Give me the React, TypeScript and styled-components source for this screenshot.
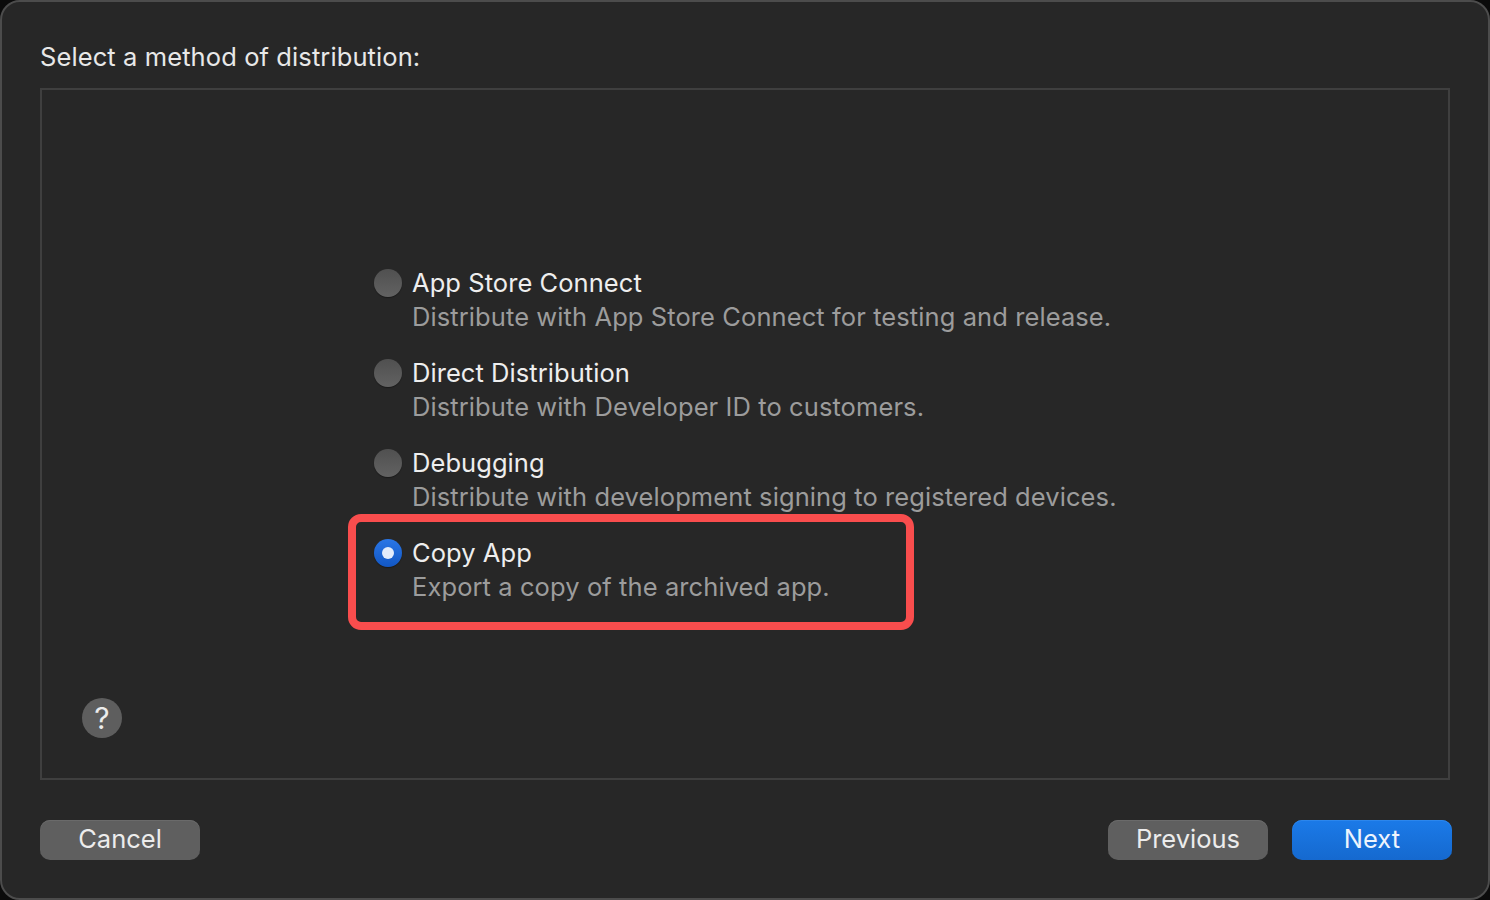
import React from "react";
import styled, { createGlobalStyle } from "styled-components";

const Global = createGlobalStyle`
  html, body { margin: 0; padding: 0; background: #0b0b0b; }
  body { width: 1490px; height: 900px; overflow: hidden; font-family: Inter, "Liberation Sans", sans-serif; }
`;

const Window = styled.div`
  box-sizing: border-box;
  width: 1490px;
  height: 900px;
  border: 2px solid #4c4c4c;
  border-radius: 20px;
  background: #272727;
  padding: 38px 36px 38px 38px;
  display: flex;
  flex-direction: column;
`;

const Heading = styled.div`
  font-size: 25.5px;
  line-height: 34px;
  letter-spacing: 0.1px;
  color: #e8e8e8;
  height: 48px;
`;

const Panel = styled.div`
  box-sizing: border-box;
  width: 1410px;
  height: 692px;
  border: 2px solid #3f3f3f;
  padding: 176px 0 0 332px;
  position: relative;
`;

const Options = styled.div`
  display: flex;
  flex-direction: column;
  position: relative;
`;

const Option = styled.div`
  display: flex;
  gap: 10px;
  height: 90px;
`;

const Radio = styled.span<{ $on?: boolean }>`
  box-sizing: border-box;
  flex: none;
  width: 28px;
  height: 28px;
  border-radius: 50%;
  margin-top: 3px;
  display: flex;
  align-items: center;
  justify-content: center;
  background: ${(p) =>
    p.$on ? "linear-gradient(#2a76e6, #1257c4)" : "linear-gradient(#505050, #626262)"};
  box-shadow: 0 1px 1px rgba(0, 0, 0, 0.35);
`;

const Dot = styled.span`
  width: 12px;
  height: 12px;
  border-radius: 50%;
  background: #e3ecfb;
`;

const Texts = styled.div`
  display: flex;
  flex-direction: column;
`;

const Title = styled.div`
  font-size: 25.5px;
  line-height: 34px;
  letter-spacing: 0.06px;
  color: #eeeeee;
  white-space: nowrap;
`;

const Description = styled.div`
  font-size: 25.5px;
  line-height: 34px;
  letter-spacing: 0.09px;
  color: #9c9c9c;
  white-space: nowrap;
`;

const Highlight = styled.div`
  box-sizing: border-box;
  position: absolute;
  left: -26px;
  top: 248px;
  width: 566px;
  height: 116px;
  border: 8px solid #f94d4d;
  border-radius: 13px;
`;

const Help = styled.div`
  position: absolute;
  left: 40px;
  top: 608px;
  width: 40px;
  height: 40px;
  border-radius: 50%;
  background: #5e5e5e;
  color: #ececec;
  font-size: 30px;
  line-height: 40px;
  text-align: center;
`;

const Footer = styled.div`
  margin-top: 40px;
  display: flex;
  align-items: center;
`;

const Button = styled.button<{ $primary?: boolean }>`
  box-sizing: border-box;
  width: 160px;
  height: 40px;
  padding: 0 0 2px;
  border: none;
  border-radius: 10px;
  font-family: inherit;
  font-size: 25.5px;
  line-height: 36px;
  color: ${(p) => (p.$primary ? "#eef4fd" : "#ececec")};
  background: ${(p) => (p.$primary ? "linear-gradient(#1b7ae8, #1569cf)" : "#5f5f5f")};
  box-shadow: inset 0 1px 0 ${(p) => (p.$primary ? "#2c86ec" : "#6a6a6a")};
`;

const Spacer = styled.div`
  flex: 1;
`;

const RightButtons = styled.div`
  display: flex;
  gap: 24px;
`;

const items = [
  { title: "App Store Connect", description: "Distribute with App Store Connect for testing and release." },
  { title: "Direct Distribution", description: "Distribute with Developer ID to customers." },
  { title: "Debugging", description: "Distribute with development signing to registered devices." },
  { title: "Copy App", description: "Export a copy of the archived app.", on: true },
];

export default function App() {
  return (
    <>
      <Global />
      <Window>
        <Heading>Select a method of distribution:</Heading>
        <Panel>
          <Options>
            {items.map((item) => (
              <Option key={item.title}>
                <Radio $on={item.on}>{item.on && <Dot />}</Radio>
                <Texts>
                  <Title>{item.title}</Title>
                  <Description>{item.description}</Description>
                </Texts>
              </Option>
            ))}
            <Highlight />
          </Options>
          <Help>?</Help>
        </Panel>
        <Footer>
          <Button>Cancel</Button>
          <Spacer />
          <RightButtons>
            <Button>Previous</Button>
            <Button $primary>Next</Button>
          </RightButtons>
        </Footer>
      </Window>
    </>
  );
}
